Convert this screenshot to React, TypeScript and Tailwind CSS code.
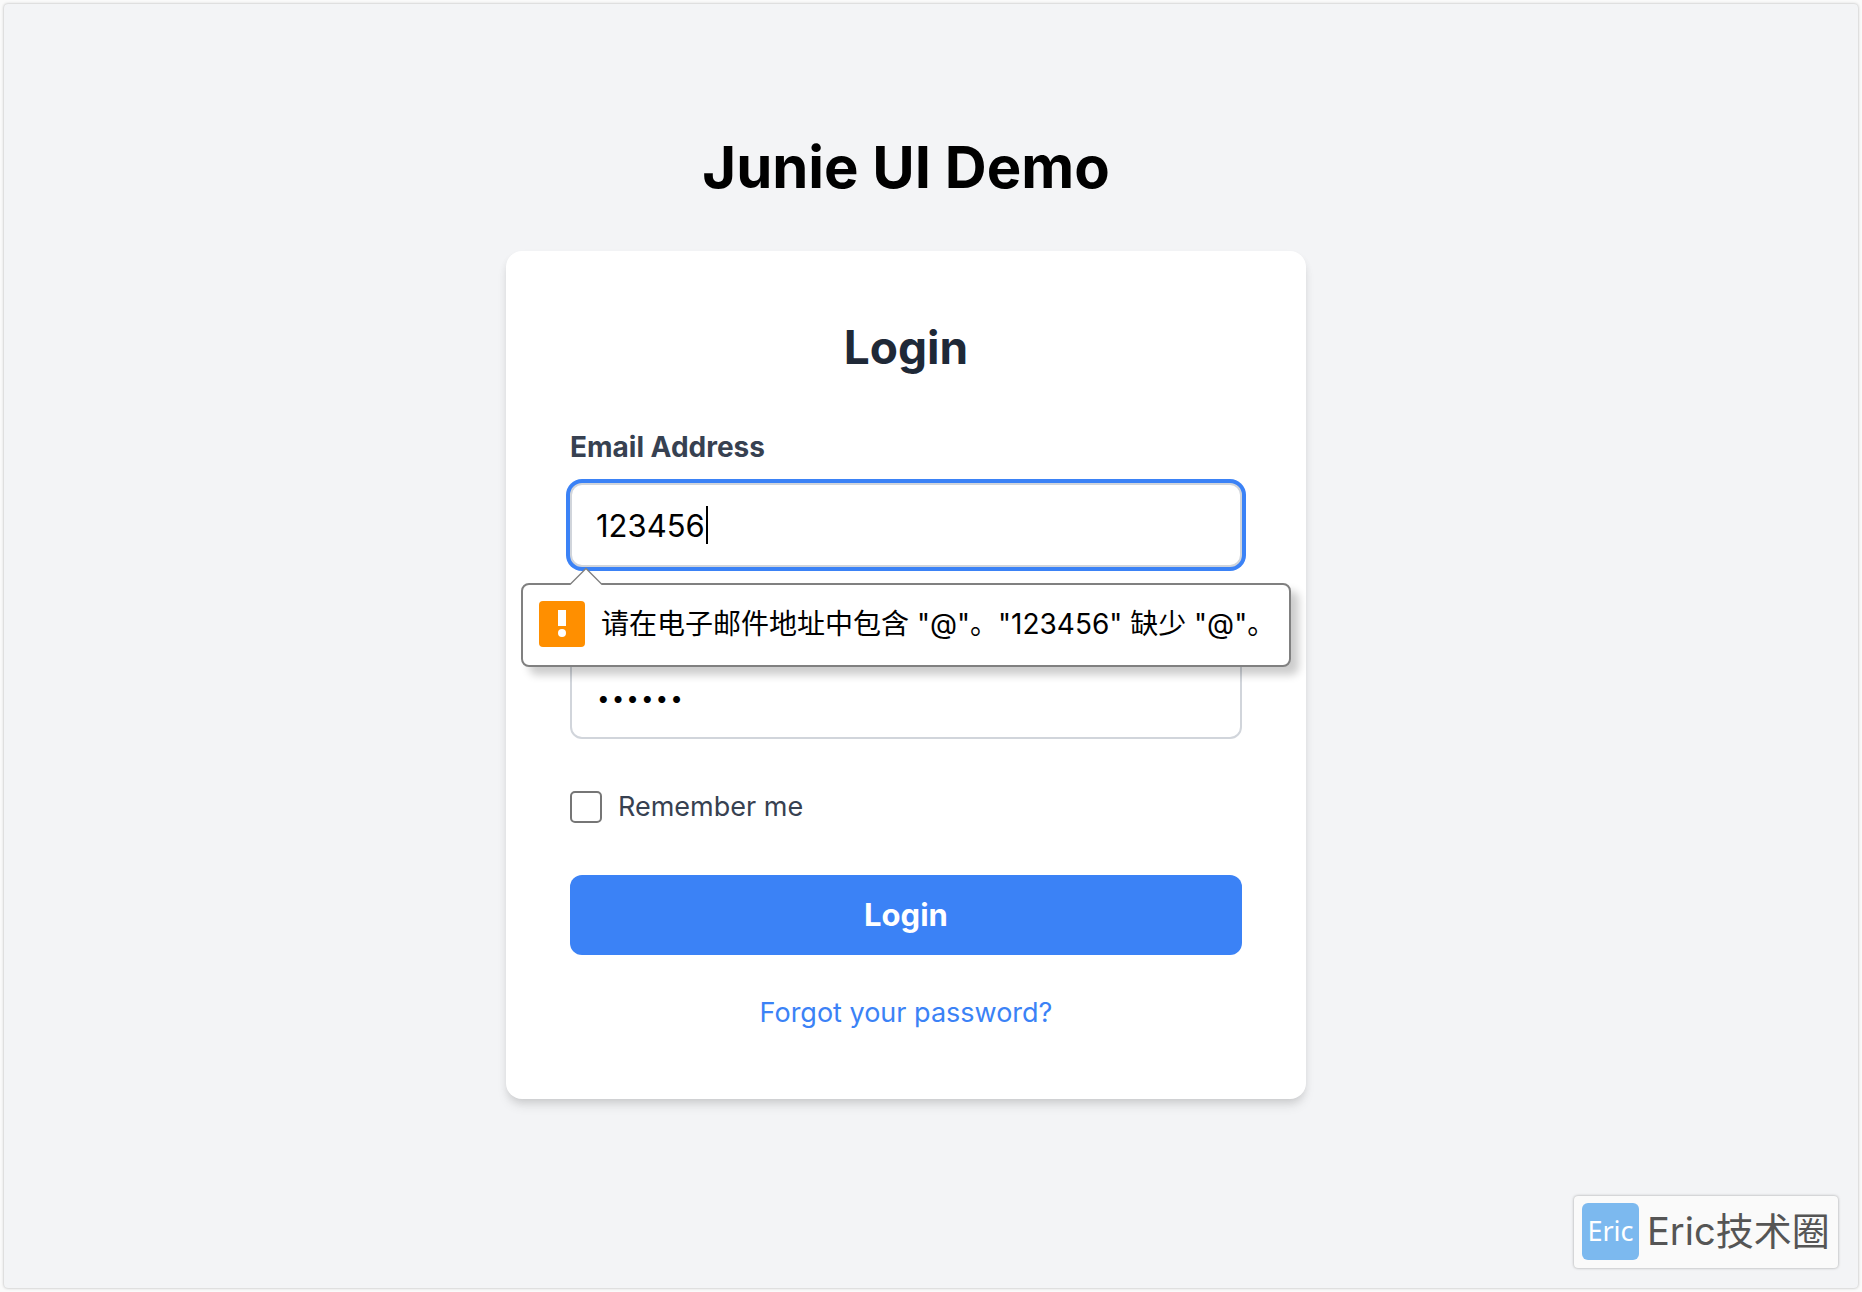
import { useState } from "react";

function ValidationBubble({ message }: { message: string }) {
  return (
    <div
      role="alert"
      className="absolute top-full -left-[49px] z-10 mt-4 flex h-[84px] w-[770px] items-center gap-4 rounded-lg border-2 border-[#808080] bg-white pb-0.5 pl-4 shadow-[8px_8px_8px_rgba(0,0,0,0.2)]"
    >
      <svg className="absolute -top-[18px] left-[46px]" width="34" height="19" viewBox="0 0 34 19" aria-hidden="true">
        <path d="M1 17.5 17 1.5l16 16V19H1z" fill="#fff" />
        <path d="M1 17.5 17 1.5l16 16" fill="none" stroke="#808080" strokeWidth="1.3" />
      </svg>
      <svg className="shrink-0" width="46" height="46" viewBox="0 0 46 46" aria-hidden="true">
        <rect width="46" height="46" rx="4" fill="#ff8f00" />
        <rect x="19" y="9" width="8" height="16" fill="#fff" />
        <circle cx="23" cy="32" r="4" fill="#fff" />
      </svg>
      <span className="text-[28px] leading-10 whitespace-nowrap text-black">{message}</span>
    </div>
  );
}

export default function App() {
  const [email, setEmail] = useState("123456");
  const [password, setPassword] = useState("123456");
  const [remember, setRemember] = useState(false);

  return (
    <div className="flex min-h-screen bg-[#fafafa] p-1 font-['Inter','Noto_Sans_CJK_SC',sans-serif]">
      <div className="relative flex flex-1 flex-col items-center rounded bg-[#f3f4f6] pt-[127px] pr-[50px] shadow-[0_0_3px_rgba(0,0,0,0.3)]">
        <h1 className="mb-12 text-[58px] leading-[72px] font-bold text-black">Junie UI Demo</h1>

        <main className="w-full max-w-[800px] rounded-2xl bg-white p-16 shadow-[0_8px_12px_-2px_rgba(0,0,0,0.1),0_4px_8px_-2px_rgba(0,0,0,0.1)]">
          <h2 className="mb-12 text-center text-[46px] leading-[64px] font-bold text-[#1f2937]">Login</h2>
          <form noValidate onSubmit={(e) => e.preventDefault()}>
            <div className="mb-8">
              <label htmlFor="email" className="mb-4 block text-[28px] leading-10 font-bold text-[#374151]">
                Email Address
              </label>
              <div className="relative">
                <input
                  id="email"
                  type="email"
                  value={email}
                  onChange={(e) => setEmail(e.target.value)}
                  className="block h-[84px] w-full rounded-xl border-2 border-[#d1d5db] bg-white px-6 text-[31px] leading-[48px] text-black caret-transparent ring-4 ring-[#3b82f6] outline-none"
                />
                <span className="absolute top-[23px] left-[136px] h-[38px] w-0.5 bg-black" aria-hidden="true" />
                <ValidationBubble message={'请在电子邮件地址中包含 "@"。"123456" 缺少 "@"。'} />
              </div>
            </div>

            <div className="mb-12">
              <label htmlFor="password" className="mb-4 block text-[28px] leading-10 font-bold text-[#374151]">
                Password
              </label>
              <input
                id="password"
                type="password"
                value={password}
                onChange={(e) => setPassword(e.target.value)}
                className="block h-[84px] w-full rounded-xl border-2 border-[#d1d5db] bg-white px-6 text-[26px] leading-[48px] font-light text-black outline-none"
              />
            </div>

            <div className="mb-12 flex items-center gap-4">
              <input
                id="remember"
                type="checkbox"
                checked={remember}
                onChange={(e) => setRemember(e.target.checked)}
                className="size-8 appearance-none rounded-[5px] border-2 border-[#767676] bg-white checked:bg-[#3b82f6]"
              />
              <label htmlFor="remember" className="text-[27px] leading-10 text-[#374151]">
                Remember me
              </label>
            </div>

            <button type="submit" className="h-20 w-full rounded-xl bg-[#3b82f6] text-[31px] leading-[48px] font-bold text-white">
              Login
            </button>

            <p className="mt-8 pt-1 text-center text-[27px] leading-[44px]">
              <a href="#forgot" className="text-[#3b82f6]">
                Forgot your password?
              </a>
            </p>
          </form>
        </main>

        <div className="absolute right-5 bottom-5 flex h-[72px] w-[264px] items-center gap-2 rounded bg-[#fafafa] pb-0.5 pl-2 shadow-[0_0_3px_rgba(0,0,0,0.35)]">
          <span className="flex size-[57px] shrink-0 items-center justify-center rounded-md bg-[#7cb9ef] font-['Noto_Sans',sans-serif] text-[27px] leading-8 text-white">
            Eric
          </span>
          <span className="text-[38px] leading-[48px] whitespace-nowrap text-[#555]">Eric技术圈</span>
        </div>
      </div>
    </div>
  );
}
